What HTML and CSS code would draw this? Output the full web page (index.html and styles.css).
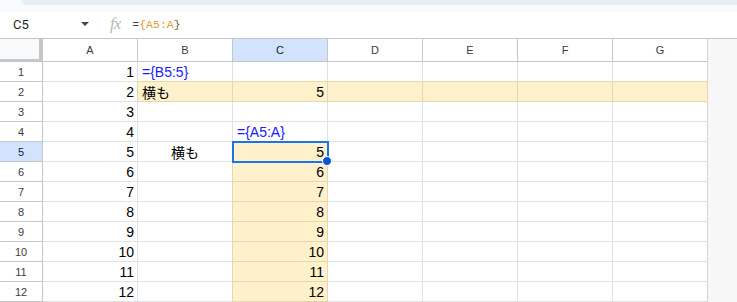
FILE: index.html
```html
<!DOCTYPE html>
<html lang="ja">
  <head>
    <meta charset="UTF-8" />
    <meta name="viewport" content="width=device-width, initial-scale=1.0" />
    <title>Sheet</title>
    <link rel="stylesheet" href="styles.css">
  </head>
  <body>
    <div class="toolbar-edge"><div class="toolbar-end"></div></div>

    <div class="formula-bar">
      <div class="name-box">
        <span class="cell-ref">C5</span>
        <span class="caret"></span>
      </div>
      <span class="fx">fx</span>
      <div class="formula"><span class="eq">=</span><span class="range">{A5:A</span><span class="brace">}</span></div>
    </div>

    <div class="sheet">
      <!-- header -->
      <div class="corner"></div>
      <div class="ch">A</div>
      <div class="ch">B</div>
      <div class="ch active">C</div>
      <div class="ch">D</div>
      <div class="ch">E</div>
      <div class="ch">F</div>
      <div class="ch last">G</div>
      <div class="pad"></div>

      <!-- 1 -->
      <div class="rh">1</div>
      <div class="c num">1</div>
      <div class="c blue tb">={B5:5}</div>
      <div class="c tb"></div>
      <div class="c tb"></div>
      <div class="c tb"></div>
      <div class="c tb"></div>
      <div class="c last tb"></div>
      <div class="pad"></div>

      <!-- 2 -->
      <div class="rh">2</div>
      <div class="c num tr">2</div>
      <div class="c hl">横も</div>
      <div class="c hl num">5</div>
      <div class="c hl"></div>
      <div class="c hl"></div>
      <div class="c hl"></div>
      <div class="c hl"></div>
      <div class="pad"></div>

      <!-- 3 -->
      <div class="rh">3</div>
      <div class="c num">3</div>
      <div class="c"></div>
      <div class="c"></div>
      <div class="c"></div>
      <div class="c"></div>
      <div class="c"></div>
      <div class="c last"></div>
      <div class="pad"></div>

      <!-- 4 -->
      <div class="rh">4</div>
      <div class="c num">4</div>
      <div class="c"></div>
      <div class="c blue tb">={A5:A}</div>
      <div class="c"></div>
      <div class="c"></div>
      <div class="c"></div>
      <div class="c last"></div>
      <div class="pad"></div>

      <!-- 5 -->
      <div class="rh active">5</div>
      <div class="c num">5</div>
      <div class="c center tr">横も</div>
      <div class="c hl num sel">5<span class="handle"></span></div>
      <div class="c"></div>
      <div class="c"></div>
      <div class="c"></div>
      <div class="c last"></div>
      <div class="pad"></div>

      <!-- 6 -->
      <div class="rh">6</div>
      <div class="c num">6</div>
      <div class="c tr"></div>
      <div class="c hl num">6</div>
      <div class="c"></div>
      <div class="c"></div>
      <div class="c"></div>
      <div class="c last"></div>
      <div class="pad"></div>

      <!-- 7 -->
      <div class="rh">7</div>
      <div class="c num">7</div>
      <div class="c tr"></div>
      <div class="c hl num">7</div>
      <div class="c"></div>
      <div class="c"></div>
      <div class="c"></div>
      <div class="c last"></div>
      <div class="pad"></div>

      <!-- 8 -->
      <div class="rh">8</div>
      <div class="c num">8</div>
      <div class="c tr"></div>
      <div class="c hl num">8</div>
      <div class="c"></div>
      <div class="c"></div>
      <div class="c"></div>
      <div class="c last"></div>
      <div class="pad"></div>

      <!-- 9 -->
      <div class="rh">9</div>
      <div class="c num">9</div>
      <div class="c tr"></div>
      <div class="c hl num">9</div>
      <div class="c"></div>
      <div class="c"></div>
      <div class="c"></div>
      <div class="c last"></div>
      <div class="pad"></div>

      <!-- 10 -->
      <div class="rh">10</div>
      <div class="c num">10</div>
      <div class="c tr"></div>
      <div class="c hl num">10</div>
      <div class="c"></div>
      <div class="c"></div>
      <div class="c"></div>
      <div class="c last"></div>
      <div class="pad"></div>

      <!-- 11 -->
      <div class="rh">11</div>
      <div class="c num">11</div>
      <div class="c tr"></div>
      <div class="c hl num">11</div>
      <div class="c"></div>
      <div class="c"></div>
      <div class="c"></div>
      <div class="c last"></div>
      <div class="pad"></div>

      <!-- 12 -->
      <div class="rh">12</div>
      <div class="c num">12</div>
      <div class="c tr"></div>
      <div class="c hl num">12</div>
      <div class="c"></div>
      <div class="c"></div>
      <div class="c"></div>
      <div class="c last"></div>
      <div class="pad"></div>
    </div>
  </body>
</html>
```

FILE: styles.css
```css
body {
  margin: 0;
  padding: 0;
  font-family: "Liberation Sans", Arial, "Noto Sans CJK JP", sans-serif;
  background-color: #ffffff;
  color: #000000;
  overflow: hidden;
}

/* 上のツールバーの端 */
.toolbar-edge {
  height: 12px;
  background-color: #f9fbfd;
}

.toolbar-end {
  height: 5px;
  margin-left: 22px;
  background-color: #e9eef6;
  border-bottom-left-radius: 8px;
}

/* 数式バー */
.formula-bar {
  height: 27px;
  display: flex;
  align-items: center;
  border-bottom: 1px solid #c4c7c5;
  padding-bottom: 2px;
  box-sizing: border-box;
}

.name-box {
  width: 97px;
  box-sizing: border-box;
  padding: 0 8px 0 13px;
  display: flex;
  align-items: center;
  justify-content: space-between;
}

.cell-ref {
  font-family: Roboto, "Liberation Sans", sans-serif;
  font-size: 13px;
  color: #1f1f1f;
}

.caret {
  width: 0;
  height: 0;
  border-left: 4px solid transparent;
  border-right: 4px solid transparent;
  border-top: 4px solid #444746;
}

.fx {
  margin-left: 13px;
  font-family: "Liberation Serif", serif;
  font-style: italic;
  font-size: 17px;
  color: #b7b9bb;
  letter-spacing: -1px;
}

.formula {
  margin-left: 12px;
  font-family: "Liberation Mono", monospace;
  font-size: 11.5px;
}

.eq {
  color: #444746;
}

.range {
  color: #e59a2f;
}

.brace {
  color: #6b5a3a;
}

/* シート */
.sheet {
  display: grid;
  grid-template-columns: 43px repeat(7, 95px) 1fr;
  grid-template-rows: 23px;
  grid-auto-rows: 20px;
}

.corner {
  background-color: #f8f9fa;
  border-right: 4px solid #c4c7c5;
  border-bottom: 3px solid #c4c7c5;
  box-sizing: border-box;
}

.ch {
  display: flex;
  align-items: center;
  justify-content: center;
  font-size: 11px;
  color: #3c3c3c;
  border-right: 1px solid #c4c7c5;
  border-bottom: 1px solid #c4c7c5;
  box-sizing: border-box;
}

.rh {
  display: flex;
  align-items: center;
  justify-content: center;
  font-size: 11px;
  color: #3c3c3c;
  border-right: 1px solid #c4c7c5;
  border-bottom: 1px solid #c4c7c5;
  box-sizing: border-box;
}

.active {
  background-color: #d3e3fd;
  color: #0b1f44;
}

.pad {
  background-color: #f6f7f6;
}

.c {
  display: flex;
  align-items: center;
  padding: 1px 4px 0 4px;
  font-size: 14px;
  white-space: nowrap;
  border-right: 1px solid #e1e1e1;
  border-bottom: 1px solid #e1e1e1;
  box-sizing: border-box;
}

.num {
  justify-content: flex-end;
  padding-right: 3px;
}

.center {
  justify-content: center;
}

.blue {
  color: #1a1aff;
}

.last {
  border-right-color: #d4d4d4;
}

/* 配列の結果 */
.hl {
  background-color: #fef1cc;
  border-right-color: #e6d8ab;
  border-bottom-color: #e6d8ab;
}

.tb {
  border-bottom-color: #e6d8ab;
}

.tr {
  border-right-color: #e6d8ab;
}

/* 選択セル */
.sel {
  position: relative;
  z-index: 1;
  outline: 2px solid #1a73e8;
  outline-offset: -1px;
}

.handle {
  position: absolute;
  right: -5px;
  bottom: -5px;
  width: 8px;
  height: 8px;
  border-radius: 50%;
  background-color: #0b57d0;
  border: 1px solid #ffffff;
}
```
